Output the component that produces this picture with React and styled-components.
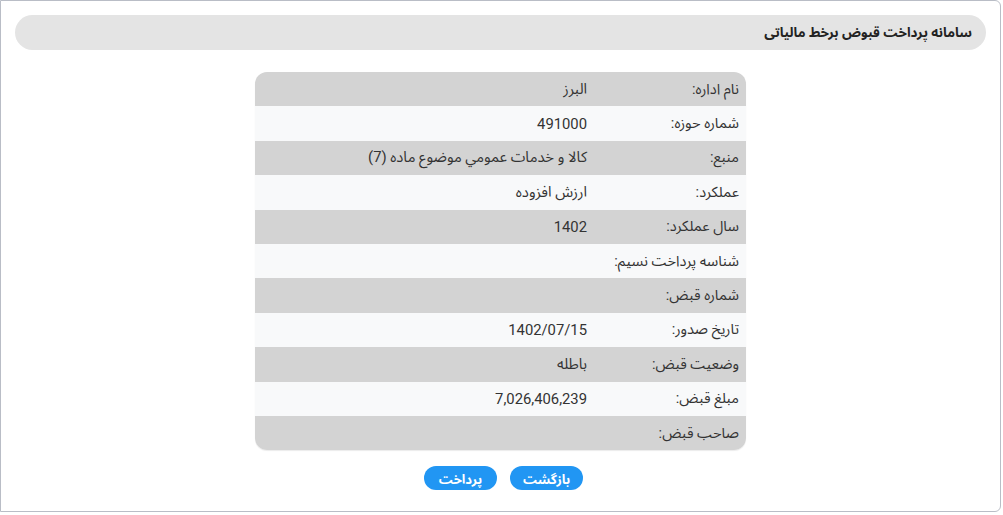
import React from "react";
import styled, { createGlobalStyle } from "styled-components";

const rows = [
  { label: "نام اداره:", value: "البرز" },
  { label: "شماره حوزه:", value: "491000" },
  { label: "منبع:", value: "كالا و خدمات عمومي موضوع ماده (7)" },
  { label: "عملکرد:", value: "ارزش افزوده" },
  { label: "سال عملکرد:", value: "1402" },
  { label: "شناسه پرداخت نسیم:", value: "" },
  { label: "شماره قبض:", value: "" },
  { label: "تاریخ صدور:", value: "1402/07/15" },
  { label: "وضعیت قبض:", value: "باطله" },
  { label: "مبلغ قبض:", value: "7,026,406,239" },
  { label: "صاحب قبض:", value: "" },
];

const App = () => {
  return (
    <>
      <GlobalStyle />
      <Frame dir="rtl">
        <Header>سامانه پرداخت قبوض برخط مالیاتی</Header>
        <Table>
          {rows.map((row, index) => (
            <Row key={index} isOdd={index % 2 === 1}>
              <Label>{row.label}</Label>
              <Value>{row.value}</Value>
            </Row>
          ))}
        </Table>
        <Actions>
          <Button>بازگشت</Button>
          <Button>پرداخت</Button>
        </Actions>
      </Frame>
    </>
  );
};

export default App;

const GlobalStyle = createGlobalStyle`
  body {
    margin: 0;
    background: #ffffff;
    font-family: Roboto, "Noto Sans Arabic", "DejaVu Sans", sans-serif;
  }
`;

const Frame = styled.div`
  box-sizing: border-box;
  width: 1001px;
  height: 512px;
  border: 1px solid #b9bdc6;
  border-radius: 0 6px 6px 0;
  padding: 14px 14px 0 14px;
  display: flex;
  flex-direction: column;
  align-items: center;
`;

const Header = styled.div`
  box-sizing: border-box;
  width: 100%;
  height: 35px;
  background: #e4e4e4;
  border-radius: 18px;
  padding: 0 14px;
  display: flex;
  align-items: center;
  font-size: 13.4px;
  font-weight: 700;
  color: #222;
`;

const Table = styled.div`
  margin-top: 22px;
  width: 491px;
  border-radius: 12px;
  overflow: hidden;
  box-shadow: 0 1px 1px rgba(0, 0, 0, 0.08);
`;

const Row = styled.div`
  height: 34.4px;
  display: flex;
  align-items: center;
  background: ${(props) => (props.isOdd ? "#f8f9fa" : "#d3d3d3")};
  color: #333;
`;

const Label = styled.div`
  width: 148px;
  padding-right: 7px;
  box-sizing: border-box;
  white-space: nowrap;
  font-size: 14.6px;
`;

const Value = styled.div`
  flex: 1;
  padding-right: 11px;
  font-size: 14.8px;
`;

const Actions = styled.div`
  margin-top: 16px;
  margin-right: -6px;
  display: flex;
  gap: 13px;
`;

const Button = styled.button`
  width: 73px;
  height: 24px;
  border: none;
  border-radius: 12px;
  background: #2196f3;
  color: #fff;
  font-family: inherit;
  font-size: 13px;
  font-weight: 700;
  cursor: pointer;
  padding: 0;
`;
